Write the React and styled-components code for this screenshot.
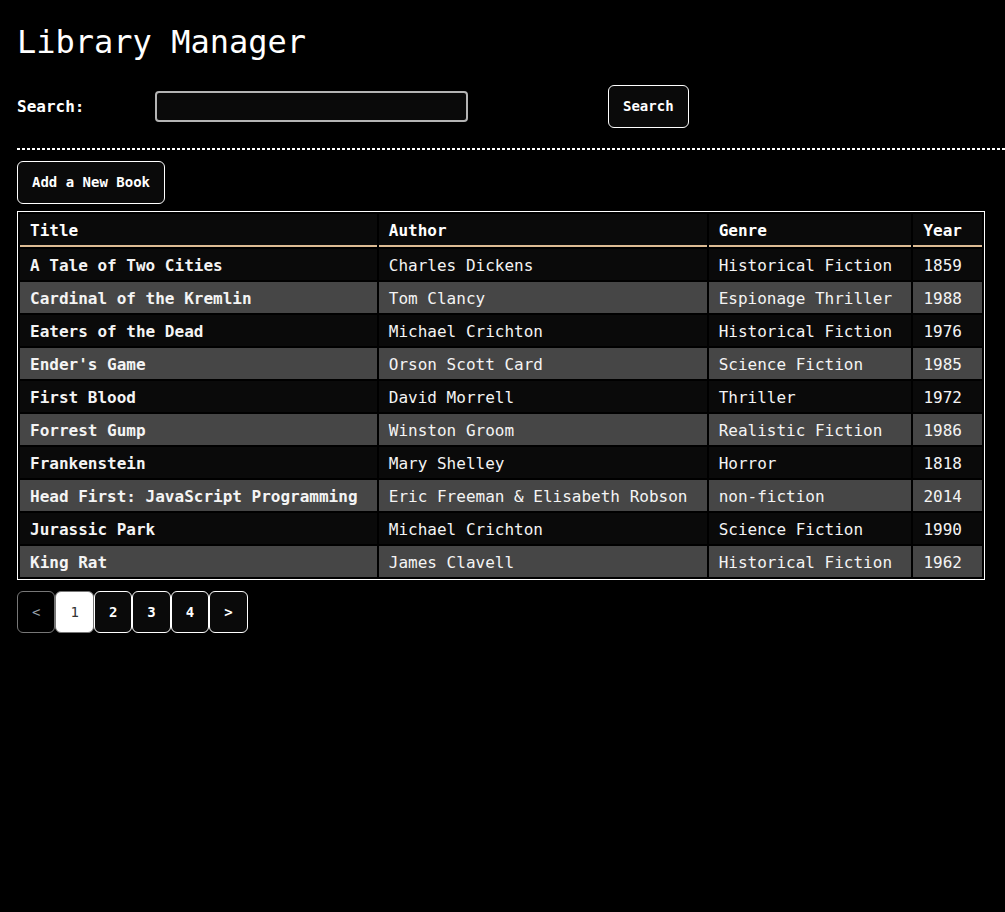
import React, { useState } from "react"
import styled, { createGlobalStyle } from "styled-components"

const books = [
  { title: "A Tale of Two Cities", author: "Charles Dickens", genre: "Historical Fiction", year: 1859 },
  { title: "Cardinal of the Kremlin", author: "Tom Clancy", genre: "Espionage Thriller", year: 1988 },
  { title: "Eaters of the Dead", author: "Michael Crichton", genre: "Historical Fiction", year: 1976 },
  { title: "Ender's Game", author: "Orson Scott Card", genre: "Science Fiction", year: 1985 },
  { title: "First Blood", author: "David Morrell", genre: "Thriller", year: 1972 },
  { title: "Forrest Gump", author: "Winston Groom", genre: "Realistic Fiction", year: 1986 },
  { title: "Frankenstein", author: "Mary Shelley", genre: "Horror", year: 1818 },
  { title: "Head First: JavaScript Programming", author: "Eric Freeman & Elisabeth Robson", genre: "non-fiction", year: 2014 },
  { title: "Jurassic Park", author: "Michael Crichton", genre: "Science Fiction", year: 1990 },
  { title: "King Rat", author: "James Clavell", genre: "Historical Fiction", year: 1962 },
]

const columns = [
  { label: "Title", width: 337 },
  { label: "Author", width: 308 },
  { label: "Genre", width: 183 },
  { label: "Year", width: 49 },
]

export default function App() {
  const [query, setQuery] = useState("")
  const [page, setPage] = useState(1)

  return (
    <>
      <GlobalStyle />
      <Page>
        <Title>Library Manager</Title>
        <SearchRow>
          <Label htmlFor="search">Search:</Label>
          <SearchInput id="search" value={query} onChange={e => setQuery(e.target.value)} />
          <Button>Search</Button>
        </SearchRow>
        <Divider />
        <Button>Add a New Book</Button>
        <BookTable>
          <thead>
            <tr>
              {columns.map(c => (
                <Th key={c.label} $w={c.width}>{c.label}</Th>
              ))}
            </tr>
          </thead>
          <tbody>
            {books.map((b, i) => (
              <Row key={b.title} $striped={i % 2 === 1}>
                <Td $bold>{b.title}</Td>
                <Td>{b.author}</Td>
                <Td>{b.genre}</Td>
                <Td>{b.year}</Td>
              </Row>
            ))}
          </tbody>
        </BookTable>
        <Pager>
          <PageBtn disabled>&lt;</PageBtn>
          {[1, 2, 3, 4].map(n => (
            <PageBtn key={n} $active={n === page} onClick={() => setPage(n)}>
              {n}
            </PageBtn>
          ))}
          <PageBtn>&gt;</PageBtn>
        </Pager>
      </Page>
    </>
  )
}

const GlobalStyle = createGlobalStyle`
  html, body {
    margin: 0;
    background: #000;
    color: #fff;
    font-family: "DejaVu Sans Mono", "Liberation Mono", monospace;
  }
`

const Page = styled.div`
  padding: 22px 0 40px 17px;
  display: flex;
  flex-direction: column;
  align-items: flex-start;
`

const Title = styled.h1`
  margin: 0;
  font-size: 32px;
  line-height: 40px;
  font-weight: normal;
`

const SearchRow = styled.div`
  margin-top: 23px;
  display: grid;
  grid-template-columns: 138px 453px auto;
  align-items: center;
`

const Label = styled.label`
  font-size: 16px;
  font-weight: bold;
`

const SearchInput = styled.input`
  width: 313px;
  height: 31px;
  box-sizing: border-box;
  background: #0a0a0a;
  border: 2px solid #b4b4b4;
  border-radius: 4px;
  color: #fff;
  font-family: inherit;
  font-size: 14px;
  padding: 0 6px;
  outline: none;
`

const Divider = styled.div`
  align-self: stretch;
  margin: 20px 0 11px;
  height: 2px;
  background: repeating-linear-gradient(90deg, #fff 0 3px, transparent 3px 5px);
`

const Button = styled.button`
  background: #0a0a0a;
  color: #fff;
  border: 1px solid #fff;
  border-radius: 6px;
  padding: 12px 14px;
  font-family: inherit;
  font-size: 14px;
  line-height: 17px;
  font-weight: bold;
  cursor: pointer;
`

const BookTable = styled.table`
  margin-top: 7px;
  width: 98%;
  border: 1px solid #fff;
  border-spacing: 2px;
  font-size: 16px;
`

const Th = styled.th`
  width: ${p => p.$w}px;
  text-align: left;
  background: #0a0a0a;
  padding: 7px 10px 5px;
  line-height: 19px;
  border-bottom: 2px solid #dcbb93;
`

const Row = styled.tr`
  background: ${p => (p.$striped ? "#464646" : "#0a0a0a")};
`

const Td = styled.td`
  padding: 7px 10px 5px;
  line-height: 19px;
  white-space: nowrap;
  color: #f4f4f4;
  font-weight: ${p => (p.$bold ? "bold" : "normal")};
`

const Pager = styled.div`
  margin-top: 11px;
  display: flex;
`

const PageBtn = styled.button`
  padding: 12px 14px;
  font-family: inherit;
  font-size: 14px;
  line-height: 16px;
  border-radius: 6px;
  border: 1px solid ${p => (p.$active || p.disabled ? "#777" : "#fff")};
  background: ${p => (p.$active ? "#fff" : p.disabled ? "#000" : "#0a0a0a")};
  color: ${p => (p.$active ? "#333" : p.disabled ? "#9aa3ad" : "#fff")};
  font-weight: ${p => (p.$active || p.disabled ? "normal" : "bold")};
  cursor: ${p => (p.disabled ? "default" : "pointer")};
`
